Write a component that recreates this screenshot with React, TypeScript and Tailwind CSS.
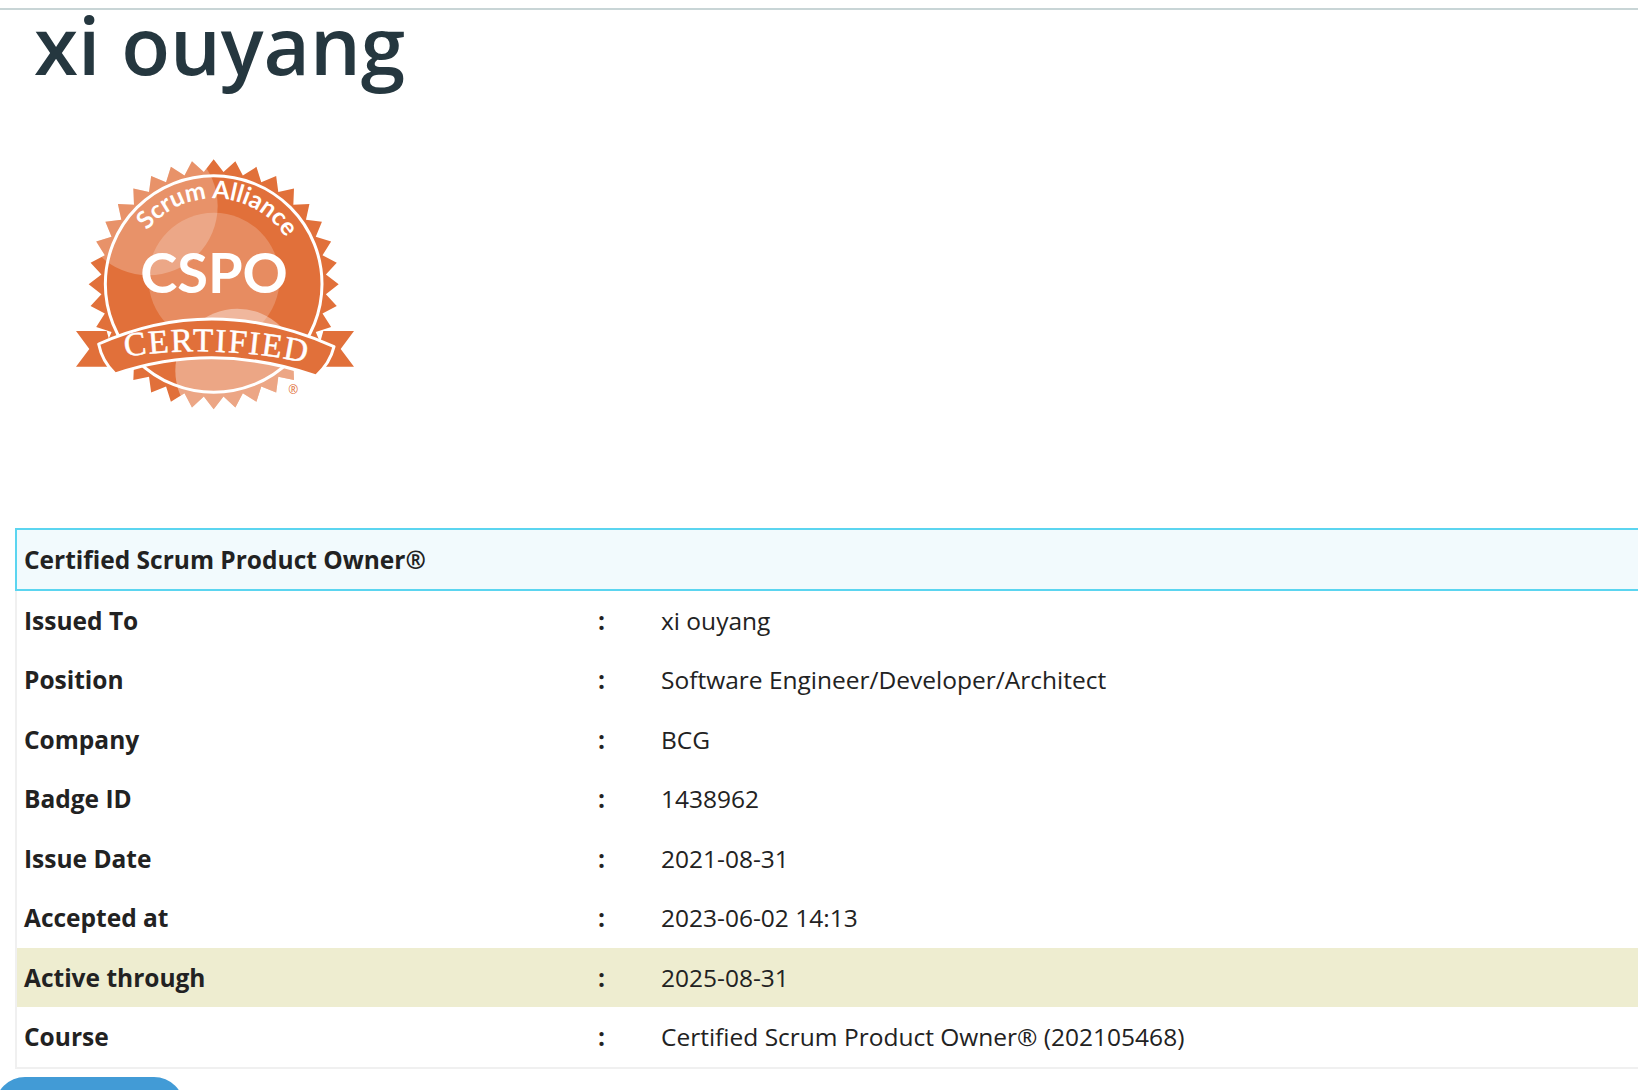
const rows = [
  { label: "Issued To", value: "xi ouyang" },
  { label: "Position", value: "Software Engineer/Developer/Architect" },
  { label: "Company", value: "BCG" },
  { label: "Badge ID", value: "1438962" },
  { label: "Issue Date", value: "2021-08-31" },
  { label: "Accepted at", value: "2023-06-02 14:13" },
  { label: "Active through", value: "2025-08-31", highlight: true },
  { label: "Course", value: "Certified Scrum Product Owner® (202105468)" },
];

// teeth around the seal
function burstPoints(cx: number, cy: number, outer: number, inner: number, teeth: number) {
  const pts: string[] = [];
  for (let i = 0; i < teeth * 2; i++) {
    const r = i % 2 === 0 ? outer : inner;
    const a = (Math.PI * i) / teeth - Math.PI / 2;
    pts.push(`${(cx + r * Math.cos(a)).toFixed(1)},${(cy + r * Math.sin(a)).toFixed(1)}`);
  }
  return pts.join(" ");
}

function Badge() {
  const burst = burstPoints(491, 433, 375, 338, 36);
  return (
    <svg viewBox="0 0 990 840" className="block w-[330px] h-[280px]">
      <defs>
        <clipPath id="burst">
          <polygon points={burst} />
        </clipPath>
        <path id="arcTop" d="M 292 272 A 255 255 0 0 1 702 286" />
        <path id="arcRibbon" d="M 226 650 Q 490 611 768 668" />
      </defs>
      <polygon points={burst} fill="#e1703a" />
      <g clipPath="url(#burst)">
        <circle cx="295" cy="198" r="208" fill="#ffffff" fillOpacity="0.24" />
        <circle cx="492" cy="415" r="197" fill="#ffffff" fillOpacity="0.2" />
        <circle cx="562" cy="692" r="186" fill="#ffffff" fillOpacity="0.38" />
      </g>
      <circle cx="491" cy="432" r="325" fill="none" stroke="#ffffff" strokeWidth="9" />
      <polygon points="78,573 170,573 200,680 78,680 118,627" fill="#e1703a" />
      <polygon points="912,573 820,573 790,680 912,680 872,627" fill="#e1703a" />
      <path
        d="M 146 612 Q 490 458 852 620 Q 840 670 798 708 Q 490 602 196 702 Q 156 664 146 612 Z"
        fill="#e1703a"
        stroke="#ffffff"
        strokeWidth="9"
        strokeLinejoin="round"
      />
      <text fill="#ffffff" fontFamily="Lato, sans-serif" fontWeight="700" fontSize="74">
        <textPath href="#arcTop" textLength="485" lengthAdjust="spacing">Scrum Alliance</textPath>
      </text>
      <text x="492" y="460" textAnchor="middle" fill="#ffffff" fontFamily="Lato, sans-serif" fontWeight="700" fontSize="168">
        CSPO
      </text>
      <text fill="#ffffff" stroke="#ffffff" strokeWidth="1.5" fontFamily="'Liberation Serif', serif" fontSize="100">
        <textPath href="#arcRibbon" textLength="545" lengthAdjust="spacing">CERTIFIED</textPath>
      </text>
      <text x="730" y="762" textAnchor="middle" fill="#e1703a" fontFamily="'Open Sans', sans-serif" fontSize="36">
        ®
      </text>
    </svg>
  );
}

export default function App() {
  return (
    <div className="h-[1090px] overflow-hidden bg-white font-['Open_Sans',sans-serif] text-[#222222]">
      <div className="mt-2 h-[2px] bg-[#c8d5d6]" />
      <h1 className="ml-[34px] h-[130px] -translate-y-[2px] pt-[1px] text-[80px] leading-[70px] font-semibold text-[#25373f]">xi ouyang</h1>
      <div className="ml-[50px] h-[388px]">
        <Badge />
      </div>
      <div className="ml-[15px] w-[1700px] border-2 border-t-0 border-[#f0f0f0]">
        <div className="-mx-[2px] flex h-[63px] items-center border-2 border-[#5bd5f0] bg-[#f2fafd] pt-[1px] pl-[7px] text-[24.5px] font-bold">
          Certified Scrum Product Owner®
        </div>
        {rows.map((row) => (
          <div key={row.label} className={`-mt-[0.06px] flex h-[59.5px] items-center pt-[1px] text-[24.5px] ${row.highlight ? "bg-[#eeedd0]" : ""}`}>
            <span className="w-[581px] pl-[7px] font-bold">{row.label}</span>
            <span className="w-[63px] font-bold">:</span>
            <span>{row.value}</span>
          </div>
        ))}
      </div>
      <div className="-ml-[5px] mt-[8px] h-[60px] w-[189px] rounded-[30px] bg-[#429bd6]" />
    </div>
  );
}
